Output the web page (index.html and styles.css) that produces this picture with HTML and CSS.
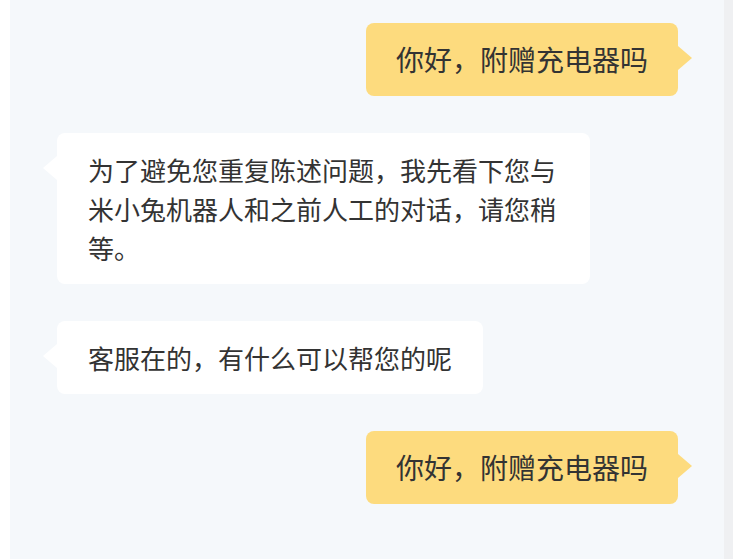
FILE: index.html
```html
<!DOCTYPE html>
<html lang="zh-CN">
<head>
    <meta charset="UTF-8">
    <meta name="viewport" content="width=device-width, initial-scale=1.0">
    <title>客服对话</title>
    <link rel="stylesheet" href="styles.css">
</head>
<body>

    <div class="page">
        <div class="side-strip"></div>

        <main class="chat-list">
            <div class="msg msg-user">
                <div class="bubble">你好，附赠充电器吗</div>
            </div>

            <div class="msg msg-agent">
                <div class="bubble">为了避免您重复陈述问题，我先看下您与米小兔机器人和之前人工的对话，请您稍等。</div>
            </div>

            <div class="msg msg-agent">
                <div class="bubble">客服在的，有什么可以帮您的呢</div>
            </div>

            <div class="msg msg-user">
                <div class="bubble">你好，附赠充电器吗</div>
            </div>
        </main>

        <!-- scrollbar track -->
        <div class="scroll-track"></div>
    </div>

</body>
</html>
```

FILE: styles.css
```css
html, body {
    margin: 0;
    padding: 0;
    height: 100%;
}
body {
    font-family: "Noto Sans CJK SC", "Liberation Sans", sans-serif;
    color: #333;
    background-color: #ffffff;
}
.page {
    display: flex;
    height: 100%;
}
.side-strip {
    width: 10px;
    flex-shrink: 0;
    background-color: #ffffff;
}
.scroll-track {
    width: 9px;
    flex-shrink: 0;
    background-color: #eff0f2;
}
.chat-list {
    flex-grow: 1;
    background-color: #f5f8fb;
    padding: 23px 46px 0 47px;
    display: flex;
    flex-direction: column;
    gap: 37px;
}
.msg {
    display: flex;
}
.msg-user {
    justify-content: flex-end;
}
.msg-agent {
    justify-content: flex-start;
}
.bubble {
    position: relative;
    border-radius: 8px;
    font-size: 26px;
    line-height: 39px;
    padding: 17px 31px;
    max-width: 471px;
    word-wrap: break-word;
}
.msg-user .bubble {
    background-color: #fddb7e;
    font-size: 28px;
    line-height: 41px;
    padding: 16px 30px;
}
.msg-agent .bubble {
    background-color: #ffffff;
}

/* little tails on the bubbles */
.bubble::after {
    content: "";
    position: absolute;
    top: 23px;
    border-top: 12px solid transparent;
    border-bottom: 12px solid transparent;
}
.msg-user .bubble::after {
    right: -14px;
    border-left: 14px solid #fddb7e;
}
.msg-agent .bubble::after {
    left: -14px;
    border-right: 14px solid #ffffff;
}
```
